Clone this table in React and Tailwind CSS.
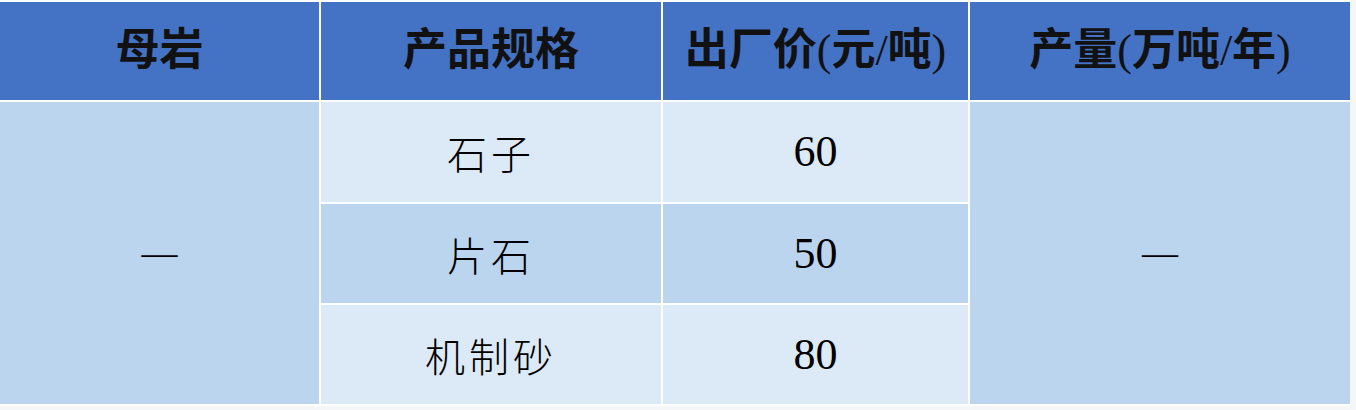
const ROWS = [
  { spec: '石子', price: '60', bg: 'bg-[#dce9f6]' },
  { spec: '片石', price: '50', bg: 'bg-[#bcd5ef]' },
  { spec: '机制砂', price: '80', bg: 'bg-[#dce9f6]' },
];

const HEADERS = ['母岩', '产品规格', '出厂价(元/吨)', '产量(万吨/年)'];

// CJK in bold, brackets and slash in plain serif, as in the source sheet
function HeaderText({ text }) {
  return text.split('').map((ch, i) =>
    /[()/]/.test(ch) ? (
      <span key={i} className="font-normal">{ch}</span>
    ) : (
      <span key={i}>{ch}</span>
    )
  );
}

export default function App() {
  return (
    <div className="w-[1356px] h-[410px] bg-[#f4f6f8] overflow-hidden">
      <div className="w-[1350px] bg-white pt-[2px] pb-[2px] pr-[2px]">
        <div className="grid grid-cols-[319px_340px_305px_380px] grid-rows-[98px_100px_99px_99px] gap-[2px] text-black">
          {HEADERS.map((h) => (
            <div
              key={h}
              className="bg-[#4472c4] flex items-center justify-center text-[44px] font-bold text-[#111] font-['Liberation_Serif','Noto_Sans_CJK_SC',sans-serif]"
            >
              <span>
                <HeaderText text={h} />
              </span>
            </div>
          ))}

          <div className="row-span-3 bg-[#bcd5ef] flex items-center justify-center text-[36px] font-['Liberation_Serif',serif]">
            —
          </div>

          {ROWS.map((r, i) => (
            <div key={r.spec} className="contents">
              <div
                className={`${r.bg} col-start-2 flex items-center justify-center text-[40px] tracking-[4px] font-['Noto_Sans_CJK_SC',sans-serif] font-light`}
              >
                {r.spec}
              </div>
              <div
                className={`${r.bg} col-start-3 flex items-center justify-center text-[44px] font-['Liberation_Serif',serif]`}
              >
                {r.price}
              </div>
              {i === 0 && (
                <div className="row-span-3 col-start-4 row-start-2 bg-[#bcd5ef] flex items-center justify-center text-[36px] font-['Liberation_Serif',serif]">
                  —
                </div>
              )}
            </div>
          ))}
        </div>
      </div>
    </div>
  );
}
